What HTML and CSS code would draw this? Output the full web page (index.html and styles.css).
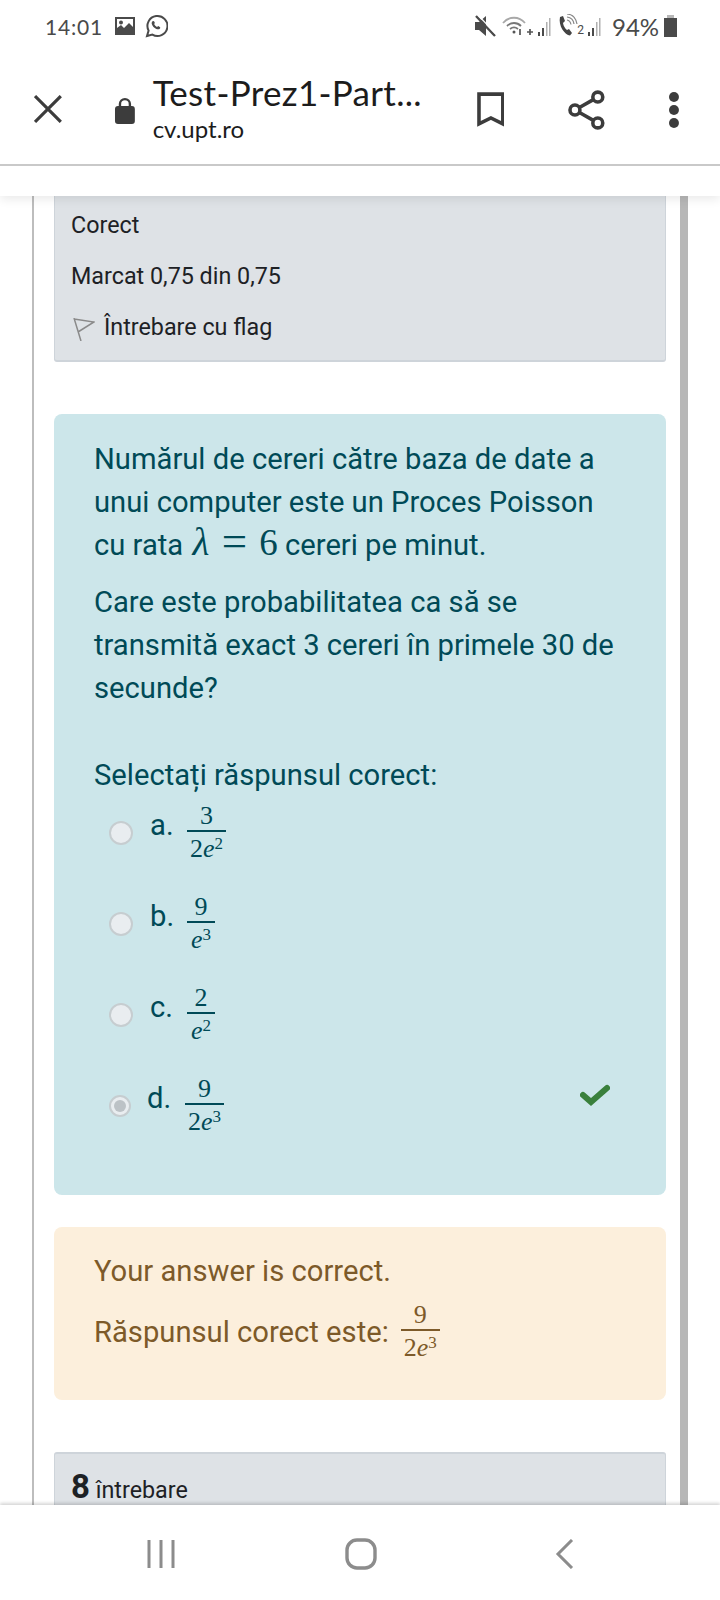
FILE: index.html
```html
<!DOCTYPE html>
<html>
<head>
  <meta charset="utf-8">
  <title>Test-Prez1-Partea</title>
  <link rel="stylesheet" href="styles.css">
</head>
<body>
  <div class="phone">
    <header class="top">
      <!-- status bar -->
      <div class="status">
        <span class="time">14:01</span>
        <svg class="st-img" width="20" height="20" viewBox="0 0 20 20"><path fill="#4a4a4a" fill-rule="evenodd" d="M0 1h20v18H0zM2 3v9l4-3 3 3 5-5 4 4V3z"/><circle cx="6" cy="6.5" r="2" fill="#4a4a4a"/></svg>
        <svg class="st-wa" width="24" height="24" viewBox="0 0 24 24"><path fill="none" stroke="#4a4a4a" stroke-width="2" d="M3 22l1.6-5.4A10 10 0 1 1 8.4 20.6z"/><path fill="#4a4a4a" d="M8.6 7.2c.5-.5 1.3-.4 1.6.2l.7 1.5-.8 1.2c.6 1.2 1.6 2.2 2.9 2.9l1.2-.9 1.6.8c.5.3.6 1 .2 1.5-.9 1-2.300 1.100-3.700.5-2.100-.9-3.900-2.800-4.500-4.900-.3-1.100 0-2 .8-2.800z"/></svg>
        <span class="status-gap"></span>
        <svg class="st-mute" width="22" height="24" viewBox="0 0 22 24"><path fill="#4a4a4a" d="M1 8h4l7-6v20l-7-6H1z"/><path stroke="#4a4a4a" stroke-width="2.400" d="M2 2l19 20"/><path stroke="#fff" stroke-width="1.200" d="M4 1l18 19"/></svg>
        <svg class="st-wifi" width="32" height="24" viewBox="0 0 32 24"><g fill="none" stroke="#a8a8a8" stroke-width="1.800"><path d="M1 9c6-7 16-7 22 0"/></g><g fill="none" stroke="#777" stroke-width="1.800"><path d="M5 12c4-4 10-4 14 0M8 15c2.500-2 5.500-2 8 0"/></g><circle cx="12" cy="18" r="1.500" fill="#555"/><path stroke="#555" stroke-width="1.700" d="M18 15v6M28 15v6M25 18h6"/></svg>
        <svg class="st-bars" width="14" height="24" viewBox="0 0 14 24"><path d="M1 18h2v4H1zM5 14h2v8H5z" fill="#4a4a4a"/><path d="M9 8h1.500v14H9zM12 4h1.500v18H12z" fill="#b0b0b0"/></svg>
        <svg class="st-call" width="22" height="24" viewBox="0 0 22 24"><path fill="#444" d="M3 3l3-1 2 5-2 2c.5 3 2 5.500 4 7l2-1 3 4-2 2.500C8 21 1 12 3 3z"/><path fill="none" stroke="#888" stroke-width="1.200" d="M10 6c2.500.5 3.500 2 4 4.500M10 3c4 .5 6.500 3 7 7M10 0c5.500.5 9 4 10 10"/></svg>
        <span class="sim">2</span>
        <svg class="st-bars" width="14" height="24" viewBox="0 0 14 24"><path d="M1 18h2v4H1zM5 14h2v8H5z" fill="#4a4a4a"/><path d="M9 8h1.500v14H9zM12 4h1.500v18H12z" fill="#b0b0b0"/></svg>
        <span class="batt-text">94%</span>
        <svg class="st-batt" width="15" height="24" viewBox="0 0 15 24"><path fill="#b8b8b8" d="M4 1h7v3H4z"/><path fill="#4a4a4a" d="M1 4h13v19H1z"/></svg>
      </div>
      <!-- custom tab toolbar -->
      <div class="toolbar">
        <svg class="tb-close" width="28" height="28" viewBox="0 0 28 28"><path stroke="#3c3c3c" stroke-width="3.200" d="M1 1l26 26M27 1L1 27"/></svg>
        <svg class="tb-lock" width="22" height="27" viewBox="0 0 22 27"><path fill="none" stroke="#3c3c3c" stroke-width="2.400" d="M6 11V7a5 5 0 0 1 10 0v4"/><rect x="1" y="9" width="20" height="18" rx="3" fill="#3c3c3c"/></svg>
        <div class="tb-title">
          <div class="tb-name">Test-Prez1-Part...</div>
          <div class="tb-host">cv.upt.ro</div>
        </div>
        <svg class="tb-mark" width="28" height="36" viewBox="0 0 28 36"><path fill="none" stroke="#3c3c3c" stroke-width="3.600" d="M2 2h24v30l-12-6-12 6z"/></svg>
        <svg class="tb-share" width="38" height="40" viewBox="0 0 38 40"><g fill="none" stroke="#3c3c3c" stroke-width="3.600"><circle cx="30" cy="7" r="5"/><circle cx="7" cy="20" r="5"/><circle cx="30" cy="33" r="5"/><path d="M25.500 9.500l-14 8M11.500 22.500l14 8"/></g></svg>
        <svg class="tb-dots" width="12" height="36" viewBox="0 0 12 36"><circle cx="6" cy="5" r="5" fill="#3c3c3c"/><circle cx="6" cy="18" r="5" fill="#3c3c3c"/><circle cx="6" cy="31" r="5" fill="#3c3c3c"/></svg>
      </div>
    </header>

    <main class="view">
      <div class="course-frame">
        <div class="info">
          <p>Corect</p>
          <p>Marcat 0,75 din 0,75</p>
          <p class="flag-line">
            <svg width="23" height="23" viewBox="0 0 23 23"><path fill="none" stroke="#8a8a8a" stroke-width="1.500" d="M2 0l7 23M2 1l20 3L6 14"/></svg>
            <span>Întrebare cu flag</span>
          </p>
        </div>

        <div class="formulation">
          <p class="q-line">Numărul de cereri către baza de date a</p>
          <p class="q-line">unui computer este un Proces Poisson</p>
          <p class="q-line">cu rata <span class="math"><i>λ</i> <span class="eq">=</span> 6</span> cereri pe minut.</p>
          <p class="q-line q-second">Care este probabilitatea ca să se</p>
          <p class="q-line">transmită exact 3 cereri în primele 30 de</p>
          <p class="q-line">secunde?</p>
          <p class="q-line q-prompt">Selectați răspunsul corect:</p>

          <div class="answer">
            <span class="radio"></span><span class="opt">a.</span>
            <span class="frac"><span class="num">3</span><span class="den">2<i>e</i><sup>2</sup></span></span>
          </div>
          <div class="answer">
            <span class="radio"></span><span class="opt">b.</span>
            <span class="frac"><span class="num">9</span><span class="den"><i>e</i><sup>3</sup></span></span>
          </div>
          <div class="answer">
            <span class="radio"></span><span class="opt">c.</span>
            <span class="frac"><span class="num">2</span><span class="den"><i>e</i><sup>2</sup></span></span>
          </div>
          <div class="answer answer-picked">
            <span class="radio radio-on"></span><span class="opt">d.</span>
            <span class="frac"><span class="num">9</span><span class="den">2<i>e</i><sup>3</sup></span></span>
            <svg class="tick" width="30" height="22" viewBox="0 0 30 22"><path fill="none" stroke="#39803c" stroke-width="6" stroke-linecap="round" d="M3 11l8 7L27 4"/></svg>
          </div>
        </div>

        <div class="feedback">
          <p>Your answer is correct.</p>
          <div class="right-answer">
            <span>Răspunsul corect este:</span>
            <span class="frac frac-fb"><span class="num">9</span><span class="den">2<i>e</i><sup>3</sup></span></span>
          </div>
        </div>

        <div class="info info-next">
          <b>8</b> <span>întrebare</span>
        </div>
      </div>
    </main>

    <!-- android nav -->
    <footer class="navbar">
      <svg width="28" height="30" viewBox="0 0 28 30"><path stroke="#8c8c8c" stroke-width="3" d="M2 1v28M14 1v28M26 1v28"/></svg>
      <svg width="32" height="32" viewBox="0 0 32 32"><rect x="2" y="2" width="28" height="28" rx="10" fill="none" stroke="#8c8c8c" stroke-width="3.400"/></svg>
      <svg width="20" height="30" viewBox="0 0 20 30"><path fill="none" stroke="#8c8c8c" stroke-width="3" d="M17 1L3 15l14 14"/></svg>
    </footer>
  </div>
</body>
</html>
```

FILE: styles.css
```css
* { box-sizing: border-box; }

html, body {
    margin: 0;
    padding: 0;
    background: #fff;
}

.phone {
    width: 720px;
    height: 1600px;
    display: flex;
    flex-direction: column;
    font-family: Roboto, "Noto Sans", sans-serif;
    overflow: hidden;
}

/* 顶部 */
.top {
    flex: 0 0 196px;
    background: #fff;
    position: relative;
    z-index: 2;
    box-shadow: 0 3px 10px rgba(0, 0, 0, 0.09);
}

.status {
    height: 50px;
    display: flex;
    align-items: center;
    padding: 2px 42px 0 45px;
    color: #4a4a4a;
}

.time {
    font-family: Lato, sans-serif;
    font-size: 21px;
    letter-spacing: 0.8px;
    width: 70px;
}

.st-wa { margin-left: 9px; }
.status-gap { flex-grow: 1; }
.st-wifi { margin-left: 6px; }
.st-bars { margin-left: 3px; }
.st-call { margin-left: 6px; }

.sim {
    font-size: 12px;
    align-self: flex-end;
    margin: 0 0 13px -2px;
}

.batt-text {
    font-family: Lato, sans-serif;
    font-size: 24px;
    margin-left: 11px;
    width: 50px;
}

.st-batt { margin-left: 1px; }

.toolbar {
    height: 116px;
    display: flex;
    align-items: center;
    border-bottom: 2px solid #c9c9c9;
    padding: 0 40px 0 34px;
}

.tb-close { margin-top: 3px; }
.tb-lock { margin: 7px 0 0 52px; }

.tb-title {
    margin: 4px 0 0 17px;
    width: 300px;
    color: #1c1c1c;
    font-family: Lato, sans-serif;
}

.tb-name {
    font-size: 35px;
    letter-spacing: 0.3px;
    line-height: 40px;
    white-space: nowrap;
}

.tb-host {
    font-size: 24px;
    line-height: 34px;
}

.tb-mark { margin: 5px 0 0 26px; }
.tb-share { margin: 5px 0 0 64px; }
.tb-dots { margin: 5px 0 0 62px; }

/* 页面内容 */
.view {
    flex: 1 1 auto;
    height: 0;
    overflow: hidden;
}

.course-frame {
    margin-left: 32px;
    width: 656px;
    border-left: 2px solid #bdbdbd;
    border-right: 8px solid #b7b7b7;
    padding: 0 14px 0 20px;
}

.info {
    background: #dee2e6;
    border: 1px solid #ced4da;
    border-top: none;
    border-bottom-width: 2px;
    border-radius: 0 0 3px 3px;
    height: 166px;
    padding: 12px 16px 0;
    color: #1d2125;
    font-size: 23.300px;
}

.info p {
    margin: 0;
    height: 51px;
    line-height: 34px;
}

.flag-line {
    display: flex;
    align-items: center;
    height: 34px !important;
}

.flag-line svg {
    margin: 5px 9px 0 1px;
}

.formulation {
    margin-top: 52px;
    height: 781px;
    background: #cce6ea;
    border-radius: 8px;
    padding: 24px 40px 0;
    color: #004a57;
    font-size: 29.200px;
}

.q-line {
    margin: 0;
    line-height: 43px;
}

.q-second { margin-top: 14px; }
.q-prompt { margin-top: 44px; }

.math {
    font-family: "Liberation Serif", "DejaVu Serif", serif;
    font-size: 37px;
    line-height: 0;
}

.math i { margin-left: 2px; font-size: 39px; }
.eq { margin: 0 3px; font-size: 45px; line-height: 0; vertical-align: -1px; }

.answer {
    display: flex;
    align-items: center;
    height: 91px;
    padding-left: 15px;
    position: relative;
}

.q-prompt + .answer { margin-top: -10px; }

.radio {
    width: 24px;
    height: 24px;
    border-radius: 50%;
    background: #e9edf0;
    border: 2px solid #c6cdd0;
    flex-shrink: 0;
}

.radio-on {
    width: 22px;
    height: 22px;
    background: #e9edf0;
    position: relative;
}

.radio-on::after {
    content: "";
    position: absolute;
    left: 3px;
    top: 3px;
    width: 12px;
    height: 12px;
    border-radius: 50%;
    background: #bcc2c6;
}

.opt {
    margin-left: 17px;
    width: 37px;
    margin-top: -16px;
    font-size: 29.200px;
}

.answer-picked .opt { margin-left: 16px; width: 38px; }

.frac {
    display: inline-flex;
    flex-direction: column;
    align-items: center;
    font-family: "Liberation Serif", "DejaVu Serif", serif;
    font-size: 26px;
    line-height: 29px;
    min-width: 28px;
}

.answer .frac { margin-top: 1px; }

.num {
    padding: 0 3px;
    line-height: 29px;
}

.den {
    border-top: 2px solid currentColor;
    padding: 0 3px;
    line-height: 33px;
    align-self: stretch;
    text-align: center;
    white-space: nowrap;
}

.den sup {
    font-size: 17px;
    line-height: 0;
    vertical-align: 8px;
}

.tick {
    position: absolute;
    right: 16px;
    top: 24px;
}

.feedback {
    margin-top: 32px;
    height: 173px;
    background: #fcefdc;
    border-radius: 8px;
    padding: 22px 40px 0;
    color: #7d5a29;
    font-size: 29.200px;
}

.feedback p {
    margin: 0;
    line-height: 44px;
}

.right-answer {
    display: flex;
    align-items: center;
    margin-top: 7px;
}

.frac-fb { margin-left: 12px; }

.info-next {
    margin-top: 52px;
    height: 80px;
    border: 1px solid #ced4da;
    border-top-width: 2px;
    border-radius: 3px 3px 0 0;
    padding: 13px 16px 0;
    font-size: 23.300px;
}

.info-next b {
    font-size: 33px;
    font-weight: 700;
}

/* 底部导航 */
.navbar {
    flex: 0 0 95px;
    position: relative;
    z-index: 2;
    background: #fff;
    box-shadow: 0 -2px 3px rgba(0, 0, 0, 0.16);
    display: grid;
    grid-template-columns: 147px 28px 170px 32px 178px 20px;
    align-items: center;
    padding-top: 2px;
}

.navbar svg:nth-child(1) { grid-column: 2; }
.navbar svg:nth-child(2) { grid-column: 4; }
.navbar svg:nth-child(3) { grid-column: 6; }
```
